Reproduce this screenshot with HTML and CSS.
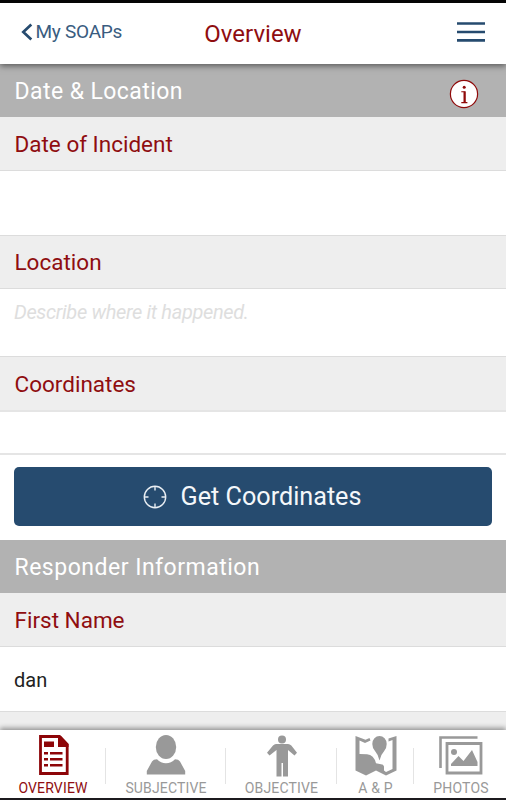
FILE: index.html
```html
<!DOCTYPE html>
<html lang="en">
<head>
<meta charset="utf-8">
<title>Overview</title>
<link rel="stylesheet" href="styles.css">
</head>
<body>
<div class="app">
  <header class="topbar">
    <a class="back"><svg width="12" height="18" viewBox="0 0 12 18"><path d="M10.3 1.5 2.3 9l8 7.5" fill="none" stroke="#264b6f" stroke-width="2.7"/></svg><span class="back-text">My SOAPs</span></a>
    <h1 class="title">Overview</h1>
    <svg class="menu" width="28" height="22" viewBox="0 0 28 22"><path d="M0 2.5h28M0 11h28M0 19.4h28" stroke="#264b6f" stroke-width="2.6"/></svg>
  </header>
  <main class="content">
    <h2 class="section"><span>Date &amp; Location</span>
      <svg class="info" width="30" height="30" viewBox="0 0 30 30"><circle cx="15" cy="15" r="13.6" fill="#fff" stroke="#900a0a" stroke-width="1.2"/><circle cx="15.2" cy="8.3" r="1.5" fill="#900a0a"/><path d="M12.3 12.8h3.7v10.8M12.3 23.6h6.1" fill="none" stroke="#900a0a" stroke-width="1.1"/><path d="M14.5 12.6h2v11h-2z" fill="#900a0a"/></svg>
    </h2>
    <div class="label"><span>Date of Incident</span></div>
    <div class="field date"></div>
    <div class="label short"><span>Location</span></div>
    <div class="field location"><span class="placeholder">Describe where it happened.</span></div>
    <div class="label coords"><span>Coordinates</span></div>
    <div class="field coords-value"></div>
    <div class="button-row">
      <button class="button"><svg width="24" height="24" viewBox="0 0 24 24"><g fill="none" stroke="#e9eef3" stroke-width="1.4"><circle cx="12" cy="12" r="10.7"/><path d="M12 1v4.5M12 18.5V23M1 12h4.5M18.5 12H23"/></g></svg><span>Get Coordinates</span></button>
    </div>
    <h2 class="section responder"><span>Responder Information</span></h2>
    <div class="label"><span>First Name</span></div>
    <div class="field name"><span class="value">dan</span></div>
    <div class="label next"></div>
  </main>
  <nav class="tabs">
    <a class="tab overview active">
      <svg width="30" height="40" viewBox="0 0 30 40"><path d="M1.5 1.5h19l7.7 8v29H1.5z" fill="#fff" stroke="#8d0508" stroke-width="2.8"/><path d="M19 1h3l7.5 8v3H19zM5 6.5h10v5.500H5z" fill="#8d0508"/><path d="M5 18.3h4m2 0h12.5M5 24.2h4m2 0h12.500M5 30.200h4m2 0h12.500" stroke="#8d0508" stroke-width="2.6"/></svg>
      <span>OVERVIEW</span></a>
    <a class="tab subjective">
      <svg width="40" height="40" viewBox="0 0 40 40"><ellipse cx="20" cy="12" rx="10.2" ry="12" fill="#999"/><path d="M.8 39.5V36L6 26.500q1.400-2.200 5-2.200 3.800 4 9 4t9-4q3.600 0 5 2.200L39.200 36v3.500z" fill="#999"/></svg>
      <span>SUBJECTIVE</span></a>
    <a class="tab objective">
      <svg width="32" height="42" viewBox="0 0 32 42"><circle cx="16" cy="4.500" r="4" fill="#999"/><path d="M10 9h12q2 0 3.300 1.500L31 17.800l-2.500 2.700L22 15v26.500h-5V28h-1.500v13.500h-5V15l-7 5.500L1 17.800l6-7.300Q8.300 9 10 9z" fill="#999"/></svg>
      <span>OBJECTIVE</span></a>
    <a class="tab ap">
      <svg width="42" height="41" viewBox="0 0 42 41"><path d="M.5 1v34.500L11 40.500l10-5 10 5 10.500-5V1l-8 2.500v3l4-1.500v29L31 37l-2-1.500v-4q-.5-2.300-3-2.300l-5-1q-2.200-8.500-9-9L4.500 19V5.500L10 8l5.500-2.500-1-2.500-4 1.700z" fill="#999"/><path d="M24.500 25.500q-1-5.500-4.500-9.500-2.700-3-2.700-7a7.200 8 0 0 1 14.400 0q0 4-2.500 7-3.700 4-4.700 9.500z" fill="#999"/></svg>
      <span>A &amp; P</span></a>
    <a class="tab photos">
      <svg width="44" height="40" viewBox="0 0 44 40"><path d="M1.500 33V2.500h37" fill="none" stroke="#999" stroke-width="2.600"/><path d="M8 8.500h34v29.500H8z" fill="none" stroke="#999" stroke-width="2.800"/><circle cx="15" cy="17" r="3" fill="#999"/><path d="M12 31v-2l7.500-8 5 5L33 15l5.500 12v4z" fill="#999"/></svg>
      <span>PHOTOS</span></a>
  </nav>
</div>
</body>
</html>
```
FILE: styles.css
```css
* { box-sizing: border-box; }
body { margin: 0; font-family: Roboto, "Liberation Sans", sans-serif; background: #fff; }
svg { display: block; flex: none; }
span { white-space: nowrap; }
.app { height: 800px; width: 506px; display: flex; flex-direction: column; overflow: hidden; border-top: 3px solid #050505; border-bottom: 2px solid #1c1a1e; }
.topbar { height: 61px; flex: none; display: grid; grid-template-columns: 1fr auto 1fr; align-items: center; padding: 0 21px; background: #fff; position: relative; z-index: 2; box-shadow: 0 2px 6px rgba(0,0,0,.5); }
.back { display: flex; align-items: center; gap: 2.5px; color: #395c80; font-size: 19px; letter-spacing: -.25px; line-height: 24px; padding-bottom: 4px; }
.title { margin: 0; font-size: 24px; font-weight: 400; line-height: 30px; color: #8f0d10; }
.menu { justify-self: end; margin-bottom: 3px; }
.content { flex: 1; min-height: 0; overflow: hidden; }
.section { margin: 0; height: 53px; padding: 2px 27px 0 14.5px; display: flex; align-items: center; justify-content: space-between; background: #b2b2b2; color: #fff; font-weight: 400; font-size: 23px; letter-spacing: .42px; }
.responder { letter-spacing: .5px; }
.info { margin-top: 5px; }
.label { height: 54px; padding: 0 14.5px; display: flex; align-items: center; background: #eee; color: #8f0d10; border-bottom: 1px solid #dcdcdc; font-size: 22.5px; }
.label.short { height: 53px; }
.label.coords { height: 55px; border-bottom: 2px solid #e5e5e5; }
.label.next { height: 40px; }
.field { border-bottom: 1px solid #dcdcdc; padding: 0 14px; }
.date { height: 65px; }
.location { height: 68px; padding-top: 11px; }
.placeholder { font-size: 20px; letter-spacing: -.35px; line-height: 24px; font-style: italic; color: #dedede; display: block; }
.coords-value { height: 43px; border-bottom: 2px solid #e5e5e5; }
.button-row { padding: 12px 14px 14px; }
.button { width: 100%; height: 59px; border: 0; border-radius: 5px; background: #264b6f; color: #f4f7fa; font: 400 25.2px Roboto, sans-serif; display: flex; align-items: center; justify-content: center; gap: 14px; padding: 0 2px 0 0; }
.name { height: 65px; display: flex; align-items: center; padding-top: 2px; }
.value { color: #222; font-size: 20px; }
.tabs { height: 68px; flex: none; display: grid; grid-template-columns: 106px 120px 111px 77px 92px; background: #fff; position: relative; z-index: 2; box-shadow: 0 -2px 5px rgba(0,0,0,.4); }
.tab { display: flex; flex-direction: column; align-items: center; justify-content: space-between; padding: 5px 0 1px; color: #999; font-size: 14px; letter-spacing: .15px; line-height: 18px; background: linear-gradient(#e4e4e4, #e4e4e4) right 18px / 1px 36px no-repeat; }
.overview svg { margin-left: 1px; }
.active { color: #8f0d10; }
.photos { background: none; padding-left: 2px; }
```
